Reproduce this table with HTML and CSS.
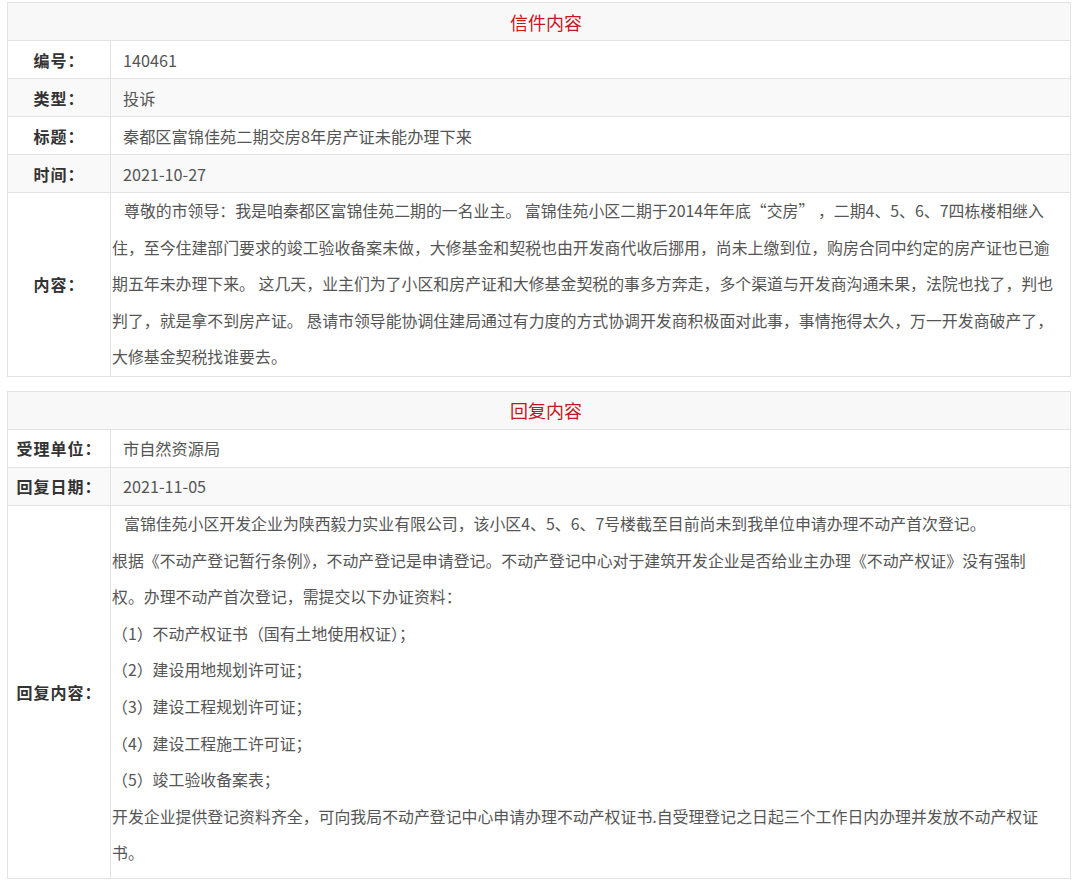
FILE: index.html
```html
<!DOCTYPE html>
<html lang="zh-CN">
<head>
<meta charset="utf-8">
<title>信件内容</title>
<link rel="stylesheet" href="styles.css">
</head>
<body>
<div class="page">
  <table class="info">
    <colgroup><col class="col-label"><col class="col-value"></colgroup>
    <tr class="head"><th colspan="2">信件内容</th></tr>
    <tr><td class="label">编号：</td><td class="value">140461</td></tr>
    <tr class="alt"><td class="label">类型：</td><td class="value">投诉</td></tr>
    <tr><td class="label">标题：</td><td class="value">秦都区富锦佳苑二期交房8年房产证未能办理下来</td></tr>
    <tr class="alt"><td class="label">时间：</td><td class="value">2021-10-27</td></tr>
    <tr><td class="label">内容：</td><td class="text"><span class="indent">尊敬的市领导：我是咱秦都区富锦佳苑二期的一名业主。 富锦佳苑小区二期于2014年年底“交房” ，二期4、5、6、7四栋楼相继入</span><br>住，至今住建部门要求的竣工验收备案未做，大修基金和契税也由开发商代收后挪用，尚未上缴到位，购房合同中约定的房产证也已逾<br>期五年未办理下来。 这几天，业主们为了小区和房产证和大修基金契税的事多方奔走，多个渠道与开发商沟通未果，法院也找了，判也<br>判了，就是拿不到房产证。 恳请市领导能协调住建局通过有力度的方式协调开发商积极面对此事，事情拖得太久，万一开发商破产了，<br>大修基金契税找谁要去。</td></tr>
  </table>

  <table class="info reply">
    <colgroup><col class="col-label"><col class="col-value"></colgroup>
    <tr class="head"><th colspan="2">回复内容</th></tr>
    <tr><td class="label">受理单位：</td><td class="value">市自然资源局</td></tr>
    <tr class="alt"><td class="label">回复日期：</td><td class="value">2021-11-05</td></tr>
    <tr><td class="label">回复内容：</td><td class="text"><span class="indent">富锦佳苑小区开发企业为陕西毅力实业有限公司，该小区4、5、6、7号楼截至目前尚未到我单位申请办理不动产首次登记。</span><br>根据《不动产登记暂行条例》，不动产登记是申请登记。不动产登记中心对于建筑开发企业是否给业主办理《不动产权证》没有强制<br>权。办理不动产首次登记，需提交以下办证资料：<br>（1）不动产权证书（国有土地使用权证）；<br>（2）建设用地规划许可证；<br>（3）建设工程规划许可证；<br>（4）建设工程施工许可证；<br>（5）竣工验收备案表；<br>开发企业提供登记资料齐全，可向我局不动产登记中心申请办理不动产权证书.自受理登记之日起三个工作日内办理并发放不动产权证<br>书。</td></tr>
  </table>
</div>
</body>
</html>
```

FILE: styles.css
```css
html, body {
  margin: 0;
  padding: 0;
  background: #ffffff;
}

body {
  font-family: "Noto Sans CJK SC", "Noto Sans", sans-serif;
  color: #555555;
}

.page {
  padding: 2px 9px 0 7px;
}

.info {
  width: 100%;
  border-collapse: separate;
  border-spacing: 0;
  border-top: 1px solid #e3e3e3;
  border-left: 1px solid #e3e3e3;
  table-layout: fixed;
}

.col-label {
  width: 103px;
}

.info.reply {
  margin-top: 14px;
}

.info th,
.info td {
  border-right: 1px solid #e3e3e3;
  border-bottom: 1px solid #e3e3e3;
  padding: 0;
  box-sizing: border-box;
}

.head th {
  height: 38px;
  background: #f8f8f8;
  color: #c8161d;
  font-size: 18px;
  font-weight: normal;
  text-align: center;
  padding-left: 14px;
  vertical-align: middle;
}

.alt td {
  background: #f9f9f9;
}

.label {
  height: 38px;
  text-align: center;
  font-weight: bold;
  font-size: 16px;
  letter-spacing: 1px;
  color: #333333;
  vertical-align: middle;
}

.value {
  font-size: 16.2px;
  padding-left: 12px !important;
  vertical-align: middle;
  color: #555555;
}

.text {
  font-size: 15.9px;
  line-height: 36.6px;
  white-space: nowrap;
  overflow: hidden;
  padding-left: 1px !important;
  vertical-align: top;
  color: #555555;
}

.reply .text {
  padding-bottom: 6px !important;
}

.indent {
  padding-left: 12px;
}
```
